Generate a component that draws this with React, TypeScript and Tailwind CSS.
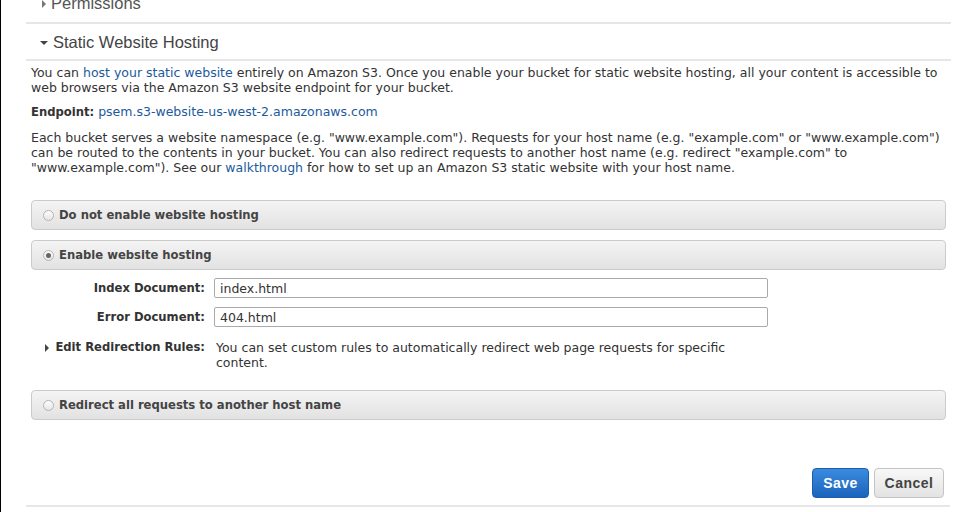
import React from 'react'

function Radio({ checked }: { checked?: boolean }) {
  return (
    <span className="flex h-[11px] w-[11px] items-center justify-center rounded-full border border-[#b5b5b5] bg-gradient-to-b from-[#fdfdfd] to-[#e6e6e6]">
      {checked && <span className="h-[5px] w-[5px] rounded-full bg-[#666]" />}
    </span>
  )
}

function OptionBar({ label, checked }: { label: string; checked?: boolean }) {
  return (
    <div className="flex h-[30px] items-center gap-[5px] rounded-[4px] border border-[#cbcbcb] bg-gradient-to-b from-[#f4f4f4] to-[#e2e2e2] pl-[11px]">
      <Radio checked={checked} />
      <span className="text-[11.6px] font-bold text-[#444]">{label}</span>
    </div>
  )
}

function Field({ label, value }: { label: string; value: string }) {
  return (
    <div className="flex items-center">
      <div className="w-[183px] pr-[9px] text-right text-[11.6px] font-bold text-[#333]">{label}</div>
      <div className="flex h-[20px] w-[554px] items-center rounded-[2px] border border-[#aaa] bg-white px-[5px] text-[12.5px] text-[#333]">
        {value}
      </div>
    </div>
  )
}

export default function App() {
  return (
    <div className="relative h-[512px] w-[953px] overflow-hidden border-l border-black bg-white font-['DejaVu_Sans',sans-serif] text-[#333]">
      <div className="ml-[25px] mr-[2px]">
        {/* collapsed section cut at the top */}
        <div className="-mt-[15px] flex h-[37px] items-center gap-[5px] pl-[16px] font-['Liberation_Sans',sans-serif] text-[16.5px] text-[#555]">
          <span className="h-0 w-0 border-y-[4px] border-l-[4px] border-y-transparent border-l-[#777]" />
          <span>Permissions</span>
        </div>
        <div className="h-[2px] bg-[#e6e6e6]" />

        <div className="flex h-[35px] items-center gap-[5px] pl-[14px] pt-[2px] font-['Liberation_Sans',sans-serif] text-[16.5px] text-[#444]">
          <span className="h-0 w-0 border-x-[4px] border-t-[4px] border-x-transparent border-t-[#444]" />
          <span>Static Website Hosting</span>
        </div>
        <div className="h-[2px] bg-[#e6e6e6]" />

        <div className="pl-[5px] pt-[4px] text-[12.5px] leading-[15px]">
          <p className="mr-[5px]">
            You can <span className="text-[#1c5a9c]">host your static website</span> entirely on Amazon S3. Once you
            enable your bucket for static website hosting, all your content is accessible to web browsers via the
            Amazon S3 website endpoint for your bucket.
          </p>
          <p className="mt-[9px]">
            <span className="text-[11.6px] font-bold">Endpoint:</span>{' '}
            <span className="text-[#1c5a9c]">psem.s3-website-us-west-2.amazonaws.com</span>
          </p>
          <p className="mr-[5px] mt-[10px]">
            Each bucket serves a website namespace (e.g. "www.example.com"). Requests for your host name (e.g.
            "example.com" or "www.example.com") can be routed to the contents in your bucket. You can also redirect
            requests to another host name (e.g. redirect "example.com" to "www.example.com"). See our{' '}
            <span className="text-[#1c5a9c]">walkthrough</span> for how to set up an Amazon S3 static website with
            your host name.
          </p>

          <div className="mr-[5px] mt-[25px] flex flex-col gap-[10px]">
            <OptionBar label="Do not enable website hosting" />
            <OptionBar label="Enable website hosting" checked />
          </div>

          <div className="mt-[8px] flex flex-col gap-[9px]">
            <Field label="Index Document:" value="index.html" />
            <Field label="Error Document:" value="404.html" />
            <div className="mt-[4px] flex">
              <div className="flex w-[183px] items-start justify-end gap-[6px] pr-[9px] text-[11.6px] font-bold">
                <span className="mt-[4px] h-0 w-0 border-y-[4px] border-l-[4px] border-y-transparent border-l-[#444]" />
                <span>Edit Redirection Rules:</span>
              </div>
              <p className="ml-[2px] w-[530px]">
                You can set custom rules to automatically redirect web page requests for specific content.
              </p>
            </div>
          </div>

          <div className="mr-[5px] mt-[20px]">
            <OptionBar label="Redirect all requests to another host name" />
          </div>

          <div className="mr-[7px] mt-[48px] flex justify-end gap-[5px] font-['Liberation_Sans',sans-serif] text-[14px] font-bold tracking-[0.5px]">
            <button className="h-[30px] w-[57px] rounded-[4px] border border-[#1d5ea8] bg-gradient-to-b from-[#3a8ce0] to-[#1b63bb] text-white">
              Save
            </button>
            <button className="h-[30px] w-[70px] rounded-[4px] border border-[#c4c4c4] bg-gradient-to-b from-[#f8f8f8] to-[#e3e3e3] text-[#444]">
              Cancel
            </button>
          </div>
        </div>
        <div className="mr-[1px] mt-[7px] h-[2px] bg-[#e6e6e6]" />
      </div>
    </div>
  )
}
